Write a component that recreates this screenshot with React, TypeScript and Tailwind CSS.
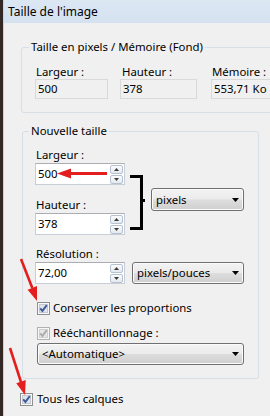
import React from "react";

function Check({ disabled = false }: { disabled?: boolean }) {
  const border = disabled ? "#b1b1b1" : "#8e8f8f";
  const inner = disabled ? "#e6e6e6" : "#dfe3ea";
  const mark = disabled ? "#adadad" : "#3f5a99";
  return (
    <svg width="13" height="13" viewBox="0 0 13 13" className="shrink-0">
      <rect x="0.5" y="0.5" width="12" height="12" fill="#f8f8f8" stroke={border} />
      <rect x="2.5" y="2.5" width="8" height="8" fill={inner} stroke={disabled ? "#d0d0d0" : "#c3c8d0"} />
      <path d="M3.2 6.4 L5.4 8.9 L9.8 3.2" fill="none" stroke={mark} strokeWidth="1.9" />
    </svg>
  );
}

function Spin({ value }: { value: string }) {
  return (
    <div className="flex h-[22px] w-[90px] items-stretch border border-[#c7ced8] border-t-[#abadb3] bg-white">
      <div className="flex flex-1 items-center pl-[2px] leading-none">{value}</div>
      <div className="mr-[1px] flex w-[13px] flex-col justify-center gap-[1px]">
        <div className="flex h-[9px] items-center justify-center rounded-[2px] border border-[#b6c2cf] bg-[linear-gradient(#fbfcfd,#e4e9ef)]">
          <svg width="5" height="3" viewBox="0 0 5 3">
            <path d="M0 3 L2.5 0 L5 3 Z" fill="#3b3b3b" />
          </svg>
        </div>
        <div className="flex h-[9px] items-center justify-center rounded-[2px] border border-[#b6c2cf] bg-[linear-gradient(#fbfcfd,#e4e9ef)]">
          <svg width="5" height="3" viewBox="0 0 5 3">
            <path d="M0 0 L2.5 3 L5 0 Z" fill="#3b3b3b" />
          </svg>
        </div>
      </div>
    </div>
  );
}

function Combo({ label, w, h = 23 }: { label: string; w: string; h?: number }) {
  return (
    <div
      className={`flex ${w} ${h === 23 ? "h-[23px]" : "h-[22px]"} items-center justify-between rounded-[3px] border border-[#707070] bg-[linear-gradient(#f3f3f3_0%,#ebebeb_48%,#dddddd_52%,#cfcfcf_100%)] pl-[4px] pr-[4px] shadow-[inset_0_0_0_1px_#fbfbfb]`}
    >
      <span className="leading-none">{label}</span>
      <svg width="7" height="4" viewBox="0 0 7 4">
        <path d="M0 0 L7 0 L3.5 4 Z" fill="#000" />
      </svg>
    </div>
  );
}

export default function App() {
  return (
    <div className="relative flex h-[416px] w-[270px] overflow-hidden font-['Noto_Sans',sans-serif] text-[11.4px] text-black">
      <div className="w-[3px] shrink-0 bg-[#342825]" />
      <div className="flex flex-1 flex-col overflow-hidden border-l border-[#c9d1da] bg-[#f0f0f0]">
        <div className="flex h-[23px] shrink-0 items-center bg-[linear-gradient(#dce7f4,#d4e1ef)] pl-[4px] text-[12px]">
          Taille de l'image
        </div>

        <fieldset className="ml-[17px] mt-[16px] w-[280px] shrink-0 rounded-[3px] border border-[#d5dfe5] pb-[13px]">
          <legend className="ml-[7px] px-[2px] leading-[16px]">Taille en pixels / Mémoire (Fond)</legend>
          <div className="flex pl-[13px] pt-[9px]">
            <div className="w-[73px]">
              <div className="leading-[15px] pl-[1px]">Largeur :</div>
              <div className="flex h-[20px] items-center border border-[#d9d9d9] pl-[2px]">500</div>
            </div>
            <div className="ml-[12px] w-[77px]">
              <div className="leading-[15px] pl-[2px]">Hauteur :</div>
              <div className="flex h-[20px] items-center border border-[#d9d9d9] pl-[2px]">378</div>
            </div>
            <div className="ml-[14px] w-[80px]">
              <div className="leading-[15px] pl-[1px]">Mémoire :</div>
              <div className="flex h-[20px] items-center border border-[#d9d9d9] pl-[2px]">553,71 Ko</div>
            </div>
          </div>
        </fieldset>

        <fieldset className="ml-[18px] mt-[10px] w-[237px] shrink-0 rounded-[3px] border border-[#d5dfe5] pb-[13px]">
          <legend className="ml-[6px] px-[2px] leading-[16px]">Nouvelle taille</legend>
          <div className="pl-[12px]">
            <div className="flex pt-[8px]">
              <div className="w-[90px]">
                <div className="pl-[1px] leading-[16px]">Largeur :</div>
                <Spin value="500" />
                <div className="mt-[12px] pl-[1px] leading-[16px]">Hauteur :</div>
                <Spin value="378" />
              </div>
              <svg width="20" height="56" viewBox="0 0 20 56" className="ml-[5px] mt-[28px] shrink-0">
                <path d="M0 1.5 H11.5 V53.5 H0 M11.5 25.5 H15" fill="none" stroke="#000" strokeWidth="3" />
              </svg>
              <div className="ml-[1px] mt-[41px]">
                <Combo label="pixels" w="w-[93px]" />
              </div>
            </div>
            <div className="mt-[11px] pl-[1px] leading-[16px]">Résolution :</div>
            <div className="flex items-start">
              <Spin value="72,00" />
              <div className="ml-[7px]">
                <Combo label="pixels/pouces" w="w-[112px]" h={22} />
              </div>
            </div>
            <div className="mt-[16px] flex h-[16px] items-center pl-[2px]">
              <Check />
              <span className="ml-[3px]">Conserver les proportions</span>
            </div>
            <div className="mt-[9px] flex h-[16px] items-center pl-[2px]">
              <Check disabled />
              <span className="ml-[3px]">Rééchantillonnage :</span>
            </div>
            <div className="mt-[2px] pl-[2px]">
              <Combo label="<Automatique>" w="w-[207px]" h={22} />
            </div>
          </div>
        </fieldset>

        <div className="ml-[16px] mt-[12px] flex h-[16px] items-center">
          <Check />
          <span className="ml-[4px]">Tous les calques</span>
        </div>
      </div>

      <svg
        width="270"
        height="416"
        viewBox="0 0 270 416"
        className="pointer-events-none absolute left-0 top-0"
      >
        <g fill="#e41e1e" stroke="#e41e1e">
          <line x1="107" y1="173.5" x2="68" y2="173.5" strokeWidth="3" />
          <polygon points="57,173.5 71,168.5 71,178.5" stroke="none" />
          <line x1="21" y1="259" x2="32.3" y2="288" strokeWidth="2.6" />
          <polygon points="37,301 37,286.1 27.6,289.7" stroke="none" />
          <line x1="10" y1="348" x2="21" y2="382" strokeWidth="2.6" />
          <polygon points="25,395 25.75,380.05 16.25,383.15" stroke="none" />
        </g>
      </svg>
    </div>
  );
}
